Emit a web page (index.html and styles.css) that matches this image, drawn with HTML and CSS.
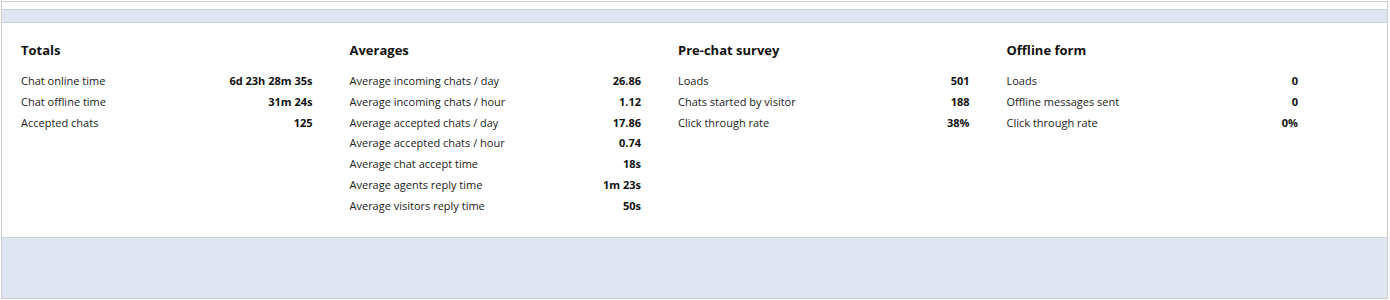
FILE: index.html
```html
<!DOCTYPE html>
<html>
<head>
<meta charset="utf-8">
<link rel="stylesheet" href="styles.css">
</head>
<body>
<div class="panel">
  <div class="band-top"></div>
  <div class="stats">
    <section class="group">
      <h3 class="title">Totals</h3>
      <div class="row"><span class="label">Chat online time</span><span class="value">6d 23h 28m 35s</span></div>
      <div class="row"><span class="label">Chat offline time</span><span class="value">31m 24s</span></div>
      <div class="row"><span class="label">Accepted chats</span><span class="value">125</span></div>
    </section>
    <section class="group">
      <h3 class="title">Averages</h3>
      <div class="row"><span class="label">Average incoming chats / day</span><span class="value">26.86</span></div>
      <div class="row"><span class="label">Average incoming chats / hour</span><span class="value">1.12</span></div>
      <div class="row"><span class="label">Average accepted chats / day</span><span class="value">17.86</span></div>
      <div class="row"><span class="label">Average accepted chats / hour</span><span class="value">0.74</span></div>
      <div class="row"><span class="label">Average chat accept time</span><span class="value">18s</span></div>
      <div class="row"><span class="label">Average agents reply time</span><span class="value">1m 23s</span></div>
      <div class="row"><span class="label">Average visitors reply time</span><span class="value">50s</span></div>
    </section>
    <section class="group">
      <h3 class="title">Pre-chat survey</h3>
      <div class="row"><span class="label">Loads</span><span class="value">501</span></div>
      <div class="row"><span class="label">Chats started by visitor</span><span class="value">188</span></div>
      <div class="row"><span class="label">Click through rate</span><span class="value">38%</span></div>
    </section>
    <section class="group">
      <h3 class="title">Offline form</h3>
      <div class="row"><span class="label">Loads</span><span class="value">0</span></div>
      <div class="row"><span class="label">Offline messages sent</span><span class="value">0</span></div>
      <div class="row"><span class="label">Click through rate</span><span class="value">0%</span></div>
    </section>
  </div>
  <div class="band-bottom"></div>
</div>
</body>
</html>
```
FILE: styles.css
```css
html, body {
  margin: 0;
  padding: 0;
  background: #ffffff;
}
body {
  font-family: "Open Sans", "DejaVu Sans", sans-serif;
  color: #1f1f1f;
}
.panel {
  margin: 1px 0 0 1px;
  width: 1385px;
  height: 296px;
  border: 1px solid #cccccc;
  display: flex;
  flex-direction: column;
  background: #ffffff;
}
.band-top {
  margin-top: 7px;
  height: 12px;
  background: #dfe6f1;
  border-top: 1px solid #cfd5df;
  border-bottom: 1px solid #cfd5df;
}
.stats {
  height: 214px;
  padding: 0 0 0 19px;
  display: grid;
  grid-template-columns: repeat(4, 328.5px);
  align-content: start;
}
.group {
  padding: 17px 37px 0 0;
}
.title {
  margin: 0 0 11px 0;
  font-size: 13px;
  font-weight: 700;
  line-height: 20px;
  color: #111111;
}
.row {
  display: flex;
  justify-content: space-between;
  font-size: 11px;
  line-height: 20.8px;
  height: 20.8px;
}
.label {
  color: #222222;
}
.value {
  font-weight: 700;
  color: #111111;
}
.band-bottom {
  flex: 1;
  background: #dfe6f1;
  border-top: 1px solid #cfd5df;
}
```
